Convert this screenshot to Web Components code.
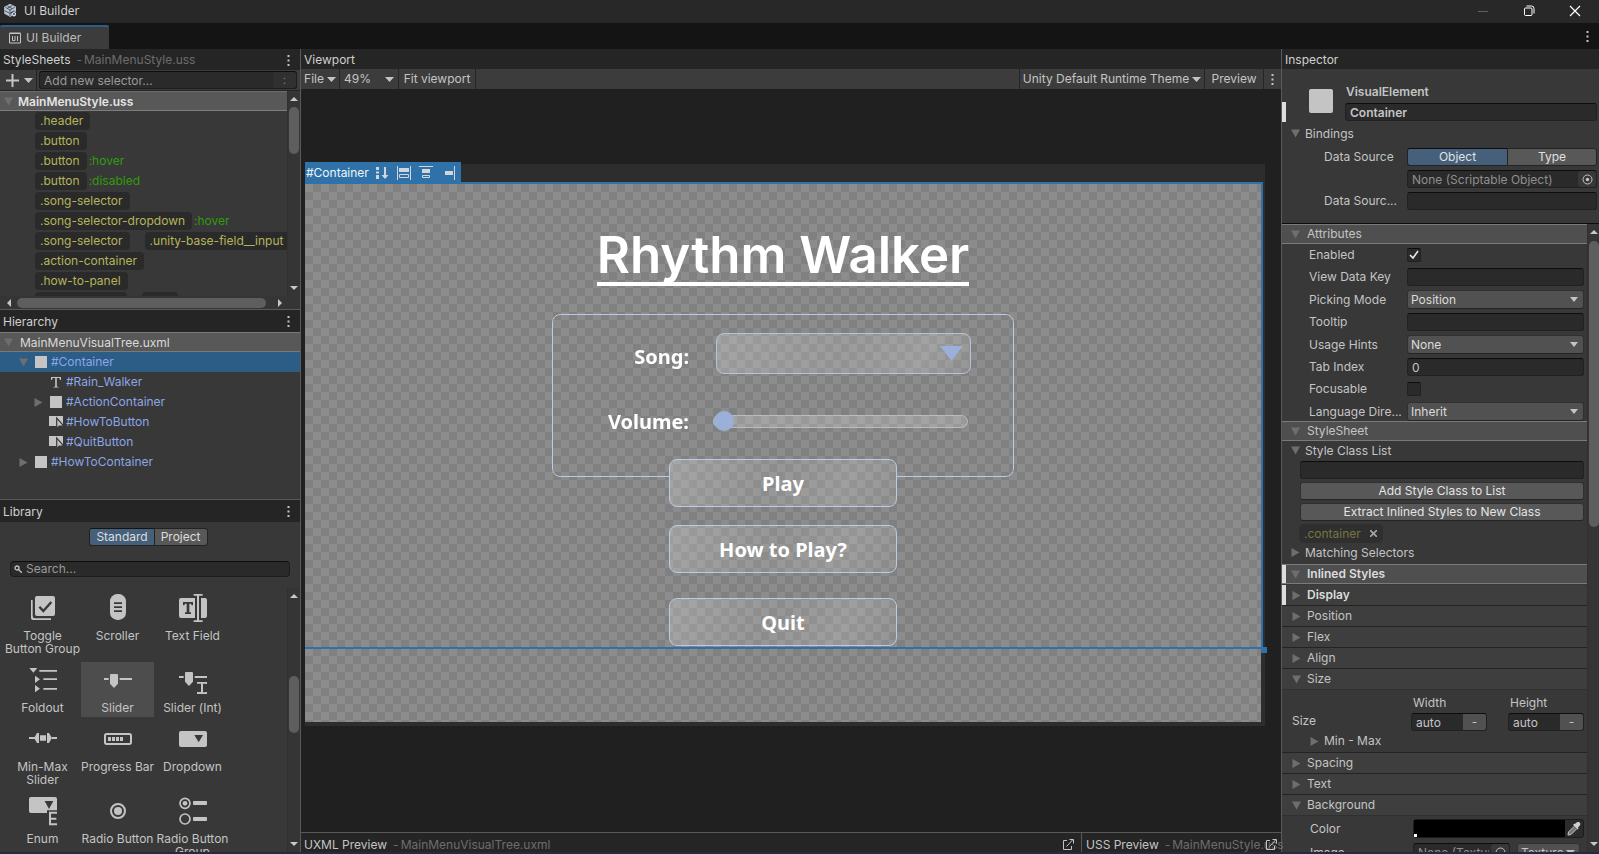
<!DOCTYPE html>
<html lang="en">
<head>
<meta charset="utf-8">
<title>UI Builder</title>
<style>
html,body{margin:0;height:100%;background:#202020}
body{font:12px/16px Inter,"Liberation Sans",sans-serif;color:#c4c4c4;overflow:hidden}
</style>
</head>
<body>
<ub-app></ub-app>
<script>
const BASE = `
*{box-sizing:border-box}
button,input,select{font:inherit;color:inherit;margin:0;border-radius:3px;outline:none}
button{padding:0;background:none;border:0;cursor:default}
svg{display:block;flex:none}
`;
const esc = s => String(s ?? '').replace(/&/g, '&amp;').replace(/</g, '&lt;').replace(/"/g, '&quot;');

/* Registers an element whose open shadow root is filled from a render function. */
function define(tag, css, render) {
  customElements.define(tag, class extends HTMLElement {
    constructor() { super(); this.attachShadow({ mode: 'open' }); }
    connectedCallback() {
      this.shadowRoot.innerHTML = `<style>${BASE}${css}</style>${render(name => esc(this.getAttribute(name)), this)}`;
    }
  });
}

const caret = `<svg width="9" height="5" viewBox="0 0 9 5"><path d="M0 0h9L4.500 5z" fill="#c4c4c4"/></svg>`;
const kebab = `<svg width="3" height="11" viewBox="0 0 3 11" fill="#c4c4c4"><path d="M.5 0h2v2h-2zM.5 4.500h2v2h-2zM.5 9h2v2h-2z"/></svg>`;
const openIcon = `<svg width="11" height="11" viewBox="0 0 11 11" fill="none" stroke="#c4c4c4"><path d="M4 1.500H.5v9h8V7M3.500 7.500l6-6.500M6.500.5h4v4" /></svg>`;
const twisty = open => `<svg width="9" height="9" viewBox="0 0 9 9" fill="#6e6e6e">${open ? '<path d="M0 .5h9L4.500 8.500z"/>' : '<path d="M.5 0v9L8.500 4.500z"/>'}</svg>`;

/* ---------- Frame of the window ---------- */
define('ub-title-bar', `
:host{display:flex;height:23px;background:#282828;align-items:center;padding:0 18px 2px 3px;font:12px/16px "Open Sans","Liberation Sans",sans-serif;color:#d8d8d8}
span{margin-left:6px;flex:1}
nav{display:flex;gap:34px;align-items:center}
button{width:12px;height:12px}
`, () => `
<svg width="15" height="15" viewBox="0 0 45 45"><path d="M3 12L21 2l18 9v18L22 42 4 32z" fill="#b9c3cf"/><path d="M7 13l14 8 14-8M21 21v18M13 9l15 8M28 7L13 16M5 23l15 8M21 31l14-8" stroke="#4b5a6c" stroke-width="3" fill="none"/><path d="M24 26h16v14H28z" fill="#2c3846"/><path d="M33 26l6 4v7l-6 4-6-4v-7z" fill="#d6dde5"/><circle cx="33" cy="33" r="3" fill="#36424f"/></svg>
<span>UI Builder</span>
<nav>
<button aria-label="Minimize"><svg width="12" height="12" viewBox="0 0 12 12" stroke="#5f5f5f"><path d="M1 6.500h10"/></svg></button>
<button aria-label="Restore"><svg width="12" height="12" viewBox="0 0 12 12" fill="none" stroke="#fff"><rect x="1.500" y="3" width="7.500" height="7.500" rx="1"/><path d="M3.500 1h5q2.500 0 2.500 2.500v5"/></svg></button>
<button aria-label="Close"><svg width="12" height="12" viewBox="0 0 12 12" stroke="#fff" stroke-width="1.200"><path d="M1 1l10 10M11 1L1 11"/></svg></button>
</nav>`);

define('ub-tab-strip', `
:host{display:flex;height:26px;background:#141414;align-items:flex-end;justify-content:space-between}
.tab{width:109px;height:24px;background:#3c3c3c;border-top:2px solid #2c5d87;border-radius:2px 2px 0 0;display:flex;align-items:center;gap:5px;padding-left:9px;color:#bdbdbd}
.menu{width:11px;height:26px;display:grid;place-items:center;margin-right:6px}
`, () => `
<button class="tab" role="tab"><svg width="12" height="12" viewBox="0 0 12 12" fill="none" stroke="#c4c4c4"><path d="M.5 1.500h11v9.500H.5zM.5 1h11" /><path d="M3.500 4v4.500h2.500V4M8.500 4v5"/></svg>UI Builder</button>
<button class="menu" aria-label="Window menu">${kebab}</button>`);

define('ub-panel', `
:host{display:flex;flex-direction:column;background:#383838;min-height:0;min-width:0;overflow:hidden}
header{flex:none;height:var(--head,21px);background:#252525;display:flex;align-items:center;padding:1px 10px 0 3px;white-space:nowrap}
h2{font:inherit;margin:0;color:#d0d0d0}
.sub{color:#6d6d6d;margin-left:6px;flex:1;display:flex;gap:2px}
`, a => `
<header><h2>${a('heading')}</h2><span class="sub">${a('sub') ? '<span>-</span><span>' + a('sub') + '</span>' : ''}</span>${a('menu') ? `<button aria-label="Panel menu">${kebab}</button>` : ''}</header>
<slot></slot>`);

define('ub-scrollbar', `
:host{display:flex;flex:none;flex-direction:column;width:13px;background:#353535;border-left:1px solid #303030;align-items:center}
:host([dir=row]){flex-direction:row;width:auto;height:13px;border:0}
i{flex:none;width:13px;height:16px;display:grid;place-items:center}
:host([dir=row]) i{width:17px;height:13px}
b{background:#5e5e5e;border-radius:5px;width:10px;min-height:0}
:host([dir=row]) b{width:auto;height:10px}
span{min-height:0}
`, a => {
  const [x, y, z] = a('parts').split(' ');
  const row = a('dir') === 'row';
  const tri = d => `<svg width="8" height="8" viewBox="0 0 8 8"><path d="${d}" fill="#c8c8c8"/></svg>`;
  return `<i>${tri(row ? 'M6 0v8L2 4z' : 'M0 6h8L4 2z')}</i><span style="flex:${x} 0 0"></span><b style="flex:${y} 0 0"></b><span style="flex:${z} 0 0"></span><i>${tri(row ? 'M2 0v8l4-4z' : 'M0 2h8L4 6z')}</i>`;
});

/* ---------- StyleSheets panel ---------- */
define('ub-selector-row', `
:host{display:flex;height:20px;padding-left:35px;align-items:center;white-space:nowrap}
.pill{flex:none;height:18px;background:#2a2a2a;border-radius:4px;padding:0 7px 0 5px;line-height:18px;color:#b5b55a}
.pseudo{color:#329b0c;margin-left:2px}
.pill+.pill{margin-left:15px}
.blank{width:92px}
.blank+.blank{width:36px}
`, a => a('parts').split(' ').map(p => p === '*' ? '<span class="pill blank"></span>' : `<span class="${p[0] === ':' ? 'pseudo' : 'pill'}">${p}</span>`).join(''));

define('ub-stylesheets', `
:host{display:flex;flex-direction:column;flex:1;min-height:0}
.bar{height:21px;display:flex;background:#3c3c3c;border-bottom:1px solid #232323}
.add{width:37px;border-right:1px solid #232323;border-radius:0;display:flex;align-items:center;gap:5px;padding-left:6px}
.field{flex:1;margin:1px 3px 1px 2px;display:flex;position:relative}
input{flex:1;min-width:0;background:#2a2a2a;border:1px solid #1c1c1c;border-top-color:#0d0d0d;padding:0 4px;height:18px}
input::placeholder{color:#9a9a9a}
.more{position:absolute;right:1px;top:1px;width:23px;height:16px;background:#303030;display:grid;place-items:center;color:#777;line-height:12px}
.body{display:flex;flex:1;min-height:0}
.rows{flex:1;min-width:0;overflow:hidden}
.file{height:20px;background:#585858;border-top:1px solid #6d6d6d;border-bottom:1px solid #7d7d7d;display:flex;align-items:center;gap:5px;padding:1px 0 0 4px;font-weight:600;color:#e4e4e4}
.foot{display:flex}
.foot ub-scrollbar{flex:1}
.foot span{width:12px;background:#353535}
`, () => `
<div class="bar">
<button class="add" aria-label="Add style sheet"><svg width="13" height="13" viewBox="0 0 13 13"><path d="M6.500 0v13M0 6.500h13" stroke="#c4c4c4" stroke-width="2"/></svg>${caret}</button>
<div class="field"><input aria-label="Add new selector" placeholder="Add new selector..."><button class="more" aria-label="Pseudo states">:</button></div>
</div>
<div class="body"><div class="rows">
<div class="file">${twisty(true)}<span>MainMenuStyle.uss</span></div>
${['.header', '.button', '.button :hover', '.button :disabled', '.song-selector', '.song-selector-dropdown :hover', '.song-selector .unity-base-field__input', '.action-container', '.how-to-panel', '* *'].map(p => `<ub-selector-row parts="${p}"></ub-selector-row>`).join('')}
</div><ub-scrollbar parts="0 46 125"></ub-scrollbar></div>
<div class="foot"><ub-scrollbar dir="row" parts="0 249 5"></ub-scrollbar><span></span></div>`);

/* ---------- Hierarchy panel ---------- */
const nodeIcons = {
  box: '<svg width="12" height="12"><rect width="12" height="12" fill="#c4c4c4"/></svg>',
  text: '<svg width="12" height="12" viewBox="0 0 12 12"><path d="M1 1h10v3h-1l-.5-2H6.800v8.500l1.700.5v.5h-5V11l1.700-.5V2H2.500L2 4H1z" fill="#c4c4c4"/></svg>',
  button: '<svg width="14" height="12" viewBox="0 0 14 12"><path d="M0 0h14v10H0z" fill="#c4c4c4"/><path d="M7.700 2v11l2.500-3h4.500z" fill="#c4c4c4" stroke="#383838" stroke-width="1.200"/></svg>'
};
define('ub-tree-node', `
:host{display:flex;height:20px;align-items:center;color:#8ba6e6}
:host([selected]){background:#2c5d87}
.row{display:grid;grid-template-columns:9px 14px auto;column-gap:6px;align-items:center;padding-left:19px}
:host([level="2"]) .row{padding-left:34px}
.name{margin-left:-3px}
.ico{display:flex;width:14px;justify-content:center}
`, (a, el) => `<div class="row" role="treeitem"><span>${el.hasAttribute('state') ? twisty(a('state') === 'open') : ''}</span><span class="ico">${nodeIcons[a('icon')]}</span><span class="name">${a('name')}</span></div>`);

define('ub-hierarchy', `
:host{display:block;flex:1}
.file{height:20px;background:#585858;border-top:1px solid #7a7a7a;border-bottom:1px solid #7a7a7a;display:flex;align-items:center;gap:7px;padding:1px 0 0 4px;color:#dadada}
`, () => `<div class="file">${twisty(true)}<span>MainMenuVisualTree.uxml</span></div>
<ub-tree-node selected state="open" icon="box" name="#Container"></ub-tree-node>
<ub-tree-node level="2" icon="text" name="#Rain_Walker"></ub-tree-node>
<ub-tree-node level="2" state="closed" icon="box" name="#ActionContainer"></ub-tree-node>
<ub-tree-node level="2" icon="button" name="#HowToButton"></ub-tree-node>
<ub-tree-node level="2" icon="button" name="#QuitButton"></ub-tree-node>
<ub-tree-node state="closed" icon="box" name="#HowToContainer"></ub-tree-node>`);

/* ---------- Library panel ---------- */
/* Glyphs are drawn in an 84-unit box. */
const D = '#383838', dark = `fill="${D}"`;
const controls = {
  toggle: `<path d="M6 18v54q0 6 6 6h54v-5H18q-7 0-7-7V18z"/><rect x="18" y="6" width="60" height="60" rx="6"/><path d="M31 38l12 13 24-27" fill="none" stroke="${D}" stroke-width="7"/>`,
  scroller: `<rect x="18" y="0" width="48" height="78" rx="22"/><path d="M30 25h24v5H30zM30 37h24v5H30zM30 49h24v5H30z" ${dark}/>`,
  textfield: `<path d="M6 12h42v60H6q-6 0-6-6V18q0-6 6-6zM66 12h12q6 0 6 6v48q0 6-6 6H66z"/><path d="M12 24h30v10h-4l-2-5h-5v26h5v5H18v-5h5V29h-5l-2 5h-4z" ${dark}/><path d="M44 0h27v5H60v74h11v5H44v-5h10V5H44z"/>`,
  foldout: `<path d="M1 6h24L13 20zM31 12h53v5H31zM18 29l15 11-15 11zM43 37h41v5H43zM18 57l15 11-15 11zM43 66h41v5H43z"/>`,
  slider: `<path d="M0 36h14v6H0zM47 36h37v6H47zM18 27q0-3 3-3h18q3 0 3 3v26L30 66 18 53z"/>`,
  sliderint: `<path d="M0 30h14v6H0zM47 30h37v6H47zM18 21q0-3 3-3h18q3 0 3 3v26L30 60 18 47zM54 48h30v6h-5v-1h-7v26h7v-1h5v6H54v-6h12V53H54z"/>`,
  minmax: `<path d="M0 36h18v6H0zM66 36h18v6H66zM24 24h6v30h-6L17 42v-6zM60 24h-6v30h6l7-12v-6zM33 31h18v16H33z"/>`,
  progress: `<rect x="3" y="27" width="78" height="30" rx="5" fill="none" stroke="#c4c4c4" stroke-width="6"/><path d="M12 36h9v12h-9zM24 36h9v12h-9zM36 36h9v12h-9zM48 36h9v12h-9z"/>`,
  dropdown: `<rect y="18" width="84" height="48" rx="6"/><path d="M46 30h26L59 52z" ${dark}/>`,
  enum: `<path d="M6 0h72q6 0 6 6v34H54v8H6q-6 0-6-6V6q0-6 6-6z"/><path d="M47 12h26L60 36z" ${dark}/><path d="M60 44h24v6H66v12h16v6H66v11h18v6H60z"/>`,
  radio: `<circle cx="42" cy="42" r="21" fill="none" stroke="#c4c4c4" stroke-width="6"/><circle cx="42" cy="42" r="12"/>`,
  radiogroup: `<circle cx="18" cy="19" r="15" fill="none" stroke="#c4c4c4" stroke-width="5"/><circle cx="18" cy="19" r="7"/><circle cx="18" cy="66" r="15" fill="none" stroke="#c4c4c4" stroke-width="5"/><rect x="42" y="12" width="42" height="12" rx="2"/><rect x="42" y="60" width="42" height="12" rx="2"/>`
};
define('ub-library-item', `
:host{display:flex;flex-direction:column;align-items:center;gap:7px;padding:4px 0 3px;line-height:13px;text-align:center}
:host([selected]){background:#4d4d4d}
svg{overflow:visible}
span{margin:0 -4px}
`, a => `<svg width="28" height="28" viewBox="0 0 84 84" fill="#c4c4c4">${controls[a('glyph')]}</svg><span>${a('label').replace('|', '<br>')}</span>`);

define('ub-library', `
:host{display:flex;flex-direction:column;flex:1;min-height:0}
.modes{display:flex;justify-content:center;padding:6px 3px 0 0}
.modes button{height:18px;background:#585858;border:1px solid #232323;padding:0 6px;line-height:16px;color:#dcdcdc}
.modes button:first-child{background:#46607c;border-radius:3px 0 0 3px;border-top-color:#141414}
.modes button:last-child{border-radius:0 3px 3px 0;border-left:0}
.search{display:flex;align-items:center;gap:4px;margin:15px 10px 11px;height:16px;background:#2a2a2a;border:1px solid #1c1c1c;border-top-color:#0d0d0d;border-radius:4px;padding-left:3px}
.search input{flex:1;min-width:0;border:0;background:none;padding:0;height:14px}
input::placeholder{color:#9a9a9a}
.body{display:flex;flex:1;min-height:0;overflow:hidden}
.grid{flex:1;display:grid;grid-template-columns:repeat(3,73px);column-gap:2px;row-gap:4px;align-content:start;align-items:start;padding:2px 0 0 6px;overflow:hidden}
`, () => `
<div class="modes"><button aria-pressed="true">Standard</button><button aria-pressed="false">Project</button></div>
<div class="search"><svg width="8" height="8" viewBox="0 0 8 8" fill="none" stroke="#c4c4c4" stroke-width="1.300"><circle cx="3" cy="3" r="2"/><path d="M4.500 4.500L8 8"/></svg><input type="search" aria-label="Search controls" placeholder="Search..."></div>
<div class="body"><div class="grid">
${[['toggle', 'Toggle|Button Group'], ['scroller', 'Scroller'], ['textfield', 'Text Field'], ['foldout', 'Foldout'], ['slider', 'Slider'], ['sliderint', 'Slider (Int)'], ['minmax', 'Min-Max|Slider'], ['progress', 'Progress Bar'], ['dropdown', 'Dropdown'], ['enum', 'Enum'], ['radio', 'Radio Button'], ['radiogroup', 'Radio Button|Group']]
  .map(([g, l]) => `<ub-library-item glyph="${g}" label="${l}"${g === 'slider' ? ' selected' : ''}></ub-library-item>`).join('')}
</div><ub-scrollbar parts="72 57 103"></ub-scrollbar></div>`);

/* ---------- Viewport ---------- */
define('ub-viewport-toolbar', `
:host{display:flex;height:20px;flex:none;background:#3c3c3c;white-space:nowrap}
:host>*{border-right:1px solid #252525}
button{border-radius:0;display:flex;align-items:center;gap:3px;padding:0 4px;justify-content:center}
.file{width:39px}
.zoom{width:59px;position:relative;display:flex;align-items:center}
select{appearance:none;width:100%;height:20px;border:0;background:none;padding:0 4px}
.zoom svg{position:absolute;right:4px}
.fit{width:77px}
.gap{flex:1}
.theme{width:185px}
.prev{width:59px}
.more{width:17px;border:0}
`, () => `<button class="file">File${caret}</button>
<div class="zoom"><select aria-label="Zoom"><option>49%</option></select>${caret}</div>
<button class="fit">Fit viewport</button><span class="gap"></span>
<button class="theme">Unity Default Runtime Theme${caret}</button><button class="prev">Preview</button><button class="more" aria-label="Viewport settings">${kebab}</button>`);

define('ub-game-menu', `
:host{display:flex;flex-direction:column;align-items:center;padding:44px 0 1px;color:#fff;font:bold 20px/26px "Noto Sans","Open Sans",sans-serif}
h1{margin:0 0 28px;font:600 51px/54px Inter,sans-serif;border-bottom:4px solid #fff;white-space:nowrap}
.panel{width:462px;height:163px;border:1px solid #b9cbe6;border-radius:8px;padding:18px 42px 0 0;display:grid;grid-template-columns:1fr 255px;column-gap:27px;row-gap:34px;grid-template-rows:41px 26px;align-items:center;
  --m:linear-gradient(#000 0 0);mask:var(--m) 0 0/100% calc(100% - 2px) no-repeat,var(--m) 0 100%/117px 2px no-repeat,var(--m) 100% 100%/117px 2px no-repeat}
label{text-align:right;padding-top:2px}
.song{padding-top:7px}
.pick{position:relative;height:41px}
select{appearance:none;width:100%;height:41px;border:1px solid #b6c4da;border-radius:8px;background:linear-gradient(120deg,rgba(255,255,255,.22),rgba(255,255,255,.14) 50%,rgba(255,255,255,.2) 80%,rgba(255,255,255,.08))}
.pick svg{position:absolute;right:8px;top:13px}
input{appearance:none;display:block;width:255px;height:20px;margin:0 0 0 -3px;background:none}
input::-webkit-slider-runnable-track{height:13px;border:1px solid #b4bcc6;border-radius:7px;background:rgba(255,255,255,.2)}
input::-webkit-slider-thumb{appearance:none;width:20px;height:20px;border-radius:50%;background:#9ab0d9;margin-top:-5px}
button{width:228px;height:48px;padding-top:2px;border:1px solid #b9cbe6;border-radius:8px;font-weight:bold;background:linear-gradient(120deg,rgba(255,255,255,.23),rgba(255,255,255,.09) 45%,rgba(255,255,255,.17) 75%,rgba(255,255,255,.07))}
.play{margin-top:-18px;margin-bottom:18px}
.how{margin-bottom:25px}
`, () => `<h1>Rhythm Walker</h1>
<div class="panel">
<label class="song" for="song">Song:</label><div class="pick"><select id="song"><option></option></select><svg width="23" height="15" viewBox="0 0 23 15"><path d="M0 0h23L11.500 15z" fill="#9ab0d9"/></svg></div>
<label for="vol">Volume:</label><input id="vol" type="range" value="0">
</div>
<button class="play">Play</button><button class="how">How to Play?</button><button>Quit</button>`);

define('ub-stage', `
:host{display:block;flex:1;min-height:0;background:#202020;padding:75px 16px 0 4px;overflow:hidden}
.frame{position:relative;background:#2d2d2d;padding:20px 4px 4px 0}
.tag{position:absolute;left:0;top:-2px;width:156px;height:22px;background:#2e72a9;color:#f0f4f8;display:flex;align-items:center;padding:0 6px 0 1px;justify-content:space-between}
.canvas{aspect-ratio:16/9;background:repeating-conic-gradient(#808080 0 25%,#8c8c8c 0 50%) 0 0/16px 16px}
.sel{position:relative}
.sel::after{content:"";position:absolute;inset:-2px -2px -2px 0;border:2px solid #2e72a9;border-left:0;pointer-events:none}
.grip{position:absolute;right:-6px;bottom:-6px;width:6px;height:6px;background:#2e72a9}
`, () => `<div class="frame">
<div class="canvas"><div class="sel"><ub-game-menu></ub-game-menu><span class="grip"></span></div></div>
<div class="tag"><span>#Container</span>
<svg width="79" height="14" viewBox="0 0 79 14" fill="#d0d6dc"><path d="M0 1h3v3H0zM0 5.500h3v2H0zM0 9h3v4H0zM8 1h2v8h2.500L9 13 5.500 9H8z"/><path d="M21 0h1v14h-1zM34 0h1v14h-1zM23 2h10v4H23z"/><path d="M23.500 8.500h9v3h-9z" fill="none" stroke="#d0d6dc"/><path d="M43 0h14v1H43zM46 3h8v4h-8z"/><path d="M46.500 9.500h7v2h-7z" fill="none" stroke="#d0d6dc"/><path d="M69 5h8v4h-8zM78 0h1v14h-1z"/></svg></div>
</div>`);

define('ub-previews', `
:host{display:flex;flex:none;height:20px;border-top:1px solid #585858;background:#252525;white-space:nowrap}
section{display:flex;align-items:center;padding:4px 10px 0 3px;position:relative}
.x{flex:1;border-right:1px solid #585858;padding-right:7px}
.x button{margin-left:auto}
.u{width:199px;padding-left:4px}
.dim{color:#6d6d6d;margin-left:6px;display:flex;gap:2px}
.u button{position:absolute;right:4px;top:6px}
`, () => `<section class="x"><span>UXML Preview</span><span class="dim"><span>-</span><span>MainMenuVisualTree.uxml</span></span><button aria-label="Open UXML file">${openIcon}</button></section>
<section class="u"><span>USS Preview</span><span class="dim"><span>-</span><span>MainMenuStyle.uss</span></span><button aria-label="Open USS file">${openIcon}</button></section>`);

/* ---------- Inspector ---------- */
const FIELD = `
input.t{height:18px;background:#2a2a2a;border:1px solid #212121;border-top-color:#0d0d0d;padding:0 4px;min-width:0;width:100%}
`;
define('ub-field', FIELD + `
:host{display:grid;grid-template-columns:minmax(0,1fr) var(--ctl,177px);align-items:center}
label{white-space:nowrap}
.sel{position:relative;display:flex;align-items:center}
select{appearance:none;height:19px;width:100%;background:#515151;border:1px solid #303030;border-bottom-color:#242424;padding:0 3px;color:#dcdcdc}
.sel svg{position:absolute;right:6px}
input[type=checkbox]{appearance:none;width:14px;height:14px;background:#2a2a2a;border:1px solid #212121;border-top-color:#0d0d0d;margin:2px 0;border-radius:2px}
.chk{position:relative;display:flex}
.chk svg{position:absolute;left:2px;top:4px}
`, (a) => {
  const kind = a('kind');
  const ctl = kind === 'select' ? `<span class="sel"><select id="c"><option>${a('value')}</option></select><svg width="8" height="5" viewBox="0 0 8 5"><path d="M0 0h8L4 5z" fill="#c4c4c4"/></svg></span>`
    : kind === 'check' ? `<span class="chk"><input id="c" type="checkbox"${a('value') ? ' checked' : ''}>${a('value') ? '<svg width="10" height="10" viewBox="0 0 10 10"><path d="M1 5l3 3 5-7" stroke="#e8e8e8" stroke-width="1.600" fill="none"/></svg>' : ''}</span>`
    : `<input id="c" class="t" type="text" value="${a('value')}">`;
  return `<label for="c">${a('label')}</label>${ctl}`;
});

define('ub-section', `
:host{display:block}
.h{display:flex;align-items:center;gap:6px;height:21px;padding-left:10px;background:#3e3e3e;border-bottom:1px solid #232323;position:relative;width:100%;text-align:left;border-radius:0}
:host([major]) .h{height:20px;background:#4f4f4f;border-top:1px solid #7a7a7a;border-bottom:1px solid #7a7a7a;gap:7px;padding-left:9px}
:host([plain]) .h{background:none;border:0;height:19px;padding-left:9px;gap:5px}
:host([open]:not([major]):not([plain])) .h{border-bottom-color:#303030}
:host([changed]) .h{font-weight:600;color:#dcdcdc}
:host([changed]) .h::before{content:"";position:absolute;left:0;top:0;bottom:0;width:4px;background:#dedede}
`, (a, el) => `<button class="h" aria-expanded="${el.hasAttribute('open')}">${twisty(el.hasAttribute('open'))}<span>${a('heading')}</span></button><slot></slot>`);

define('ub-inspector-head', FIELD + `
:host{display:block;flex:none;height:155px;border-bottom:1px solid #0c0c0c;padding:16px 2px 0 0}
.id{display:grid;grid-template-columns:24px 1fr;column-gap:12px;padding-left:27px;position:relative}
.id::before{content:"";position:absolute;left:0;bottom:-1px;width:4px;height:20px;background:#dedede}
.sq{width:24px;height:24px;border-radius:2px;background:#c4c4c4;margin-top:4px}
.nm{font-weight:600;display:grid;row-gap:3px}
.nm label{margin-top:-1px;padding-left:1px}
.bind{display:block;margin-top:3px}
.b{padding-left:42px;display:grid;row-gap:4px;margin-top:5px}
.row{display:grid;grid-template-columns:83px 1fr;align-items:center}
.seg{display:grid;grid-template-columns:100px 1fr}
.seg button{height:18px;background:#585858;border:1px solid #232323;border-radius:0 3px 3px 0;color:#e0e0e0;line-height:16px}
.seg button:first-child{background:#46607c;border-radius:3px 0 0 3px;border-top-color:#0d0d0d;border-right:0}
.obj{position:relative;grid-column:2;display:flex}
.obj input{color:#8f8f8f}
.obj button{position:absolute;right:1px;top:1px;width:18px;height:16px;background:#383838;display:grid;place-items:center}
.b ub-field{--ctl:190px}
`, () => `<div class="id"><span class="sq"></span><div class="nm"><label for="n">VisualElement</label><input id="n" class="t" value="Container"></div></div>
<ub-section class="bind" plain open heading="Bindings">
<div class="b">
<div class="row"><span id="ds">Data Source</span><div class="seg" role="group" aria-labelledby="ds"><button>Object</button><button>Type</button></div></div>
<div class="row"><div class="obj"><input class="t" readonly aria-label="Data source object" value="None (Scriptable Object)"><button aria-label="Pick object"><svg width="11" height="11" viewBox="0 0 11 11"><circle cx="5.500" cy="5.500" r="4.500" fill="none" stroke="#c4c4c4"/><circle cx="5.500" cy="5.500" r="1.700" fill="#c4c4c4"/></svg></button></div></div>
<ub-field kind="text" label="Data Sourc..."></ub-field>
</div></ub-section>`);

define('ub-length', FIELD + `
:host{display:block}
label{display:block;padding-left:2px;margin-bottom:2px}
.w{display:flex;position:relative}
button{position:absolute;right:1px;top:1px;width:23px;height:16px;background:#515151;border-radius:0 2px 2px 0;line-height:14px}
`, a => `<label for="l">${a('label')}</label><div class="w"><input id="l" class="t" value="auto"><button aria-label="${a('label')} unit">-</button></div>`);

define('ub-inspector-body', FIELD + `
:host{display:flex;flex:1;min-height:0}
.list{flex:1;min-width:0;overflow:hidden}
.attrs{display:grid;row-gap:4px;padding:2px 3px 0 27px}
.cls{display:grid;row-gap:3px;padding:1px 3px 0 18px}
.cls button.wide{height:18px;background:#585858;border:1px solid #303030;border-bottom-color:#242424;line-height:16px;color:#e4e4e4}
.pill{justify-self:start;margin-left:-1px;height:19px;background:#2f2f2f;border-radius:5px;padding:0 6px 0 5px;display:flex;align-items:center;gap:9px;color:#76763e}
.match{margin-bottom:2px}
.inl{margin-bottom:1px}
.size{height:63px;display:grid;grid-template-columns:1fr 76px 76px;column-gap:21px;padding:5px 3px 0 10px;border-bottom:1px solid #232323;grid-template-rows:36px 20px}
.size .l{align-self:end;padding-bottom:2px}
.mm{padding-left:18px;display:flex;align-items:center;gap:5px}
.bg{display:grid;row-gap:5px;padding:3px 3px 0 28px}
.row{display:grid;grid-template-columns:103px 1fr;align-items:center}
.col{height:19px;background:#2c2c2c;border:1px solid #1c1c1c;border-radius:3px;display:flex;align-items:center}
.sw{flex:1;height:17px;border-radius:0;background:linear-gradient(#fff,#fff) 0 100%/3px 3px no-repeat #000}
.col .p{width:18px;display:grid;place-items:center}
.im{display:grid;grid-template-columns:97px 63px;column-gap:7px;position:relative}
.im input{color:#8f8f8f;padding-right:20px}
.im button{position:absolute;left:78px;top:1px;width:18px;height:16px;background:#383838;display:grid;place-items:center}
.im .s{position:relative}
.im select{appearance:none;width:100%;height:19px;background:#515151;border:1px solid #303030;padding:0 3px}
.im .s svg{position:absolute;right:5px;top:7px}
ub-scrollbar{width:12px}
`, () => `<div class="list">
<ub-section major open heading="Attributes"><div class="attrs">
<ub-field kind="check" label="Enabled" value="1"></ub-field>
<ub-field kind="text" label="View Data Key"></ub-field>
<ub-field kind="select" label="Picking Mode" value="Position"></ub-field>
<ub-field kind="text" label="Tooltip"></ub-field>
<ub-field kind="select" label="Usage Hints" value="None"></ub-field>
<ub-field kind="text" label="Tab Index" value="0"></ub-field>
<ub-field kind="check" label="Focusable"></ub-field>
<ub-field kind="select" label="Language Dire..." value="Inherit"></ub-field>
</div></ub-section>
<ub-section major open heading="StyleSheet">
<ub-section plain open heading="Style Class List"><div class="cls">
<input class="t" aria-label="Style class name">
<button class="wide">Add Style Class to List</button>
<button class="wide">Extract Inlined Styles to New Class</button>
<span class="pill">.container<svg width="7" height="7" viewBox="0 0 7 7"><path d="M0 0l7 7M7 0L0 7" stroke="#a8a8a8" stroke-width="1.600"/></svg></span>
</div></ub-section>
<ub-section class="match" plain heading="Matching Selectors"></ub-section>
</ub-section>
<ub-section class="inl" major open changed heading="Inlined Styles"></ub-section>
<ub-section changed heading="Display"></ub-section>
<ub-section heading="Position"></ub-section>
<ub-section heading="Flex"></ub-section>
<ub-section heading="Align"></ub-section>
<ub-section open heading="Size"><div class="size"><span class="l">Size</span><ub-length label="Width"></ub-length><ub-length label="Height"></ub-length><span class="mm">${twisty(false)}Min&nbsp;-&nbsp;Max</span></div></ub-section>
<ub-section heading="Spacing"></ub-section>
<ub-section heading="Text"></ub-section>
<ub-section open heading="Background"><div class="bg">
<div class="row"><span>Color</span><div class="col"><button class="sw" aria-label="Background color"></button><button class="p" aria-label="Pick a color"><svg width="14" height="14" viewBox="0 0 14 14"><path d="M8.500 1.500q3-3 4.500-.5 1 1.500-1 3.500l-1 1 .5 1-1 1L6 3l1-1z" fill="#d0d0d0"/><path d="M7 4.500L1.500 10l-.5 3 3-.5L9.500 7" fill="#777" stroke="#c4c4c4"/></svg></button></div></div>
<div class="row"><label for="img">Image</label><div class="im"><input id="img" class="t" readonly value="None (Texture)"><button aria-label="Pick image"><svg width="11" height="11" viewBox="0 0 11 11"><circle cx="5.500" cy="5.500" r="4.500" fill="none" stroke="#c4c4c4"/></svg></button><span class="s"><select aria-label="Image type"><option>Texture</option></select>${caret}</span></div></div>
</div></ub-section>
</div><ub-scrollbar parts="1 286 309"></ub-scrollbar>`);

/* ---------- Application ---------- */
define('ub-app', `
:host{display:flex;box-sizing:border-box;flex-direction:column;height:100vh;overflow:hidden;border-bottom:2px solid #2b2740}
main{flex:1;min-height:0;display:grid;grid-template-columns:301px 1fr 318px}
.left{display:grid;grid-template-rows:261px 190px 1fr;border-right:1px solid #5a5a5a;min-height:0}
.left ub-panel{border-bottom:1px solid #585858;--head:22px}
.left ub-panel:first-child{--head:21px}
.left ub-panel:last-child{border:0}
.mid{display:flex;flex-direction:column;min-width:0;min-height:0;--head:20px}
.mid ub-panel{flex:1}
.right{border-left:1px solid #5a5a5a;--head:20px}
`, () => `<ub-title-bar></ub-title-bar><ub-tab-strip></ub-tab-strip>
<main>
<div class="left">
<ub-panel heading="StyleSheets" sub="MainMenuStyle.uss" menu="1"><ub-stylesheets></ub-stylesheets></ub-panel>
<ub-panel heading="Hierarchy" menu="1"><ub-hierarchy></ub-hierarchy></ub-panel>
<ub-panel heading="Library" menu="1"><ub-library></ub-library></ub-panel>
</div>
<div class="mid"><ub-panel heading="Viewport"><ub-viewport-toolbar></ub-viewport-toolbar><ub-stage></ub-stage></ub-panel><ub-previews></ub-previews></div>
<ub-panel class="right" heading="Inspector"><ub-inspector-head></ub-inspector-head><ub-inspector-body></ub-inspector-body></ub-panel>
</main>`);
</script>
</body>
</html>
